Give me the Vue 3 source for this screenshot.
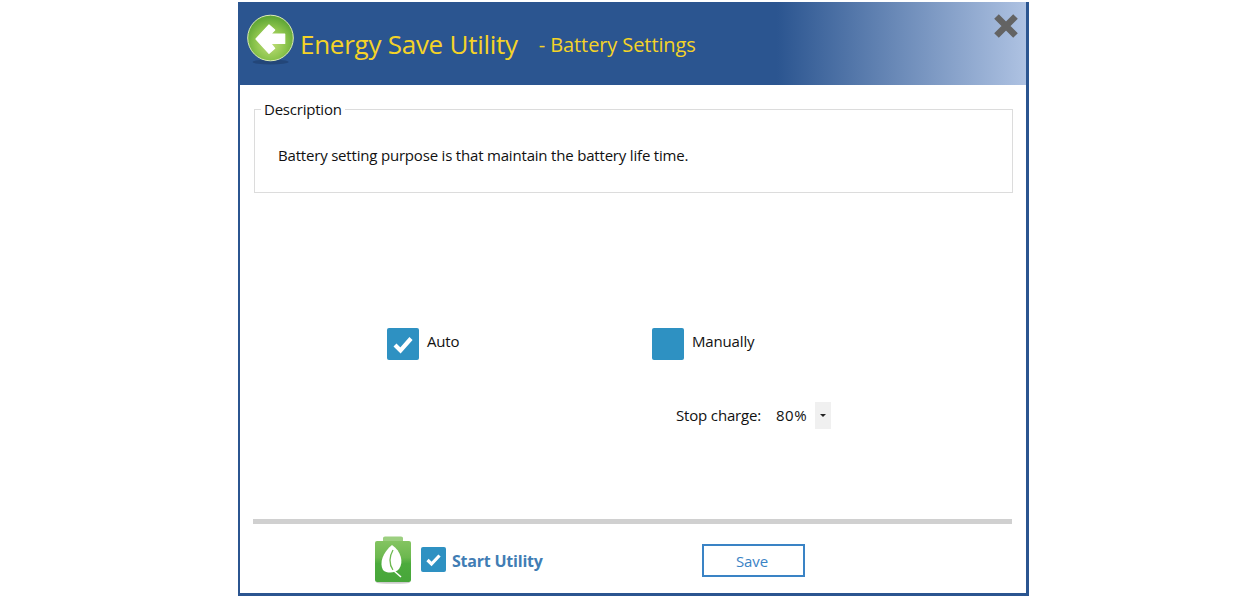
<script setup>
import { ref } from 'vue'

const auto = ref(true)
const manual = ref(false)
const startUtility = ref(true)
</script>

<template>
  <div class="page">
    <div class="window">
      <header class="header">
        <svg class="back" width="50" height="52" viewBox="0 0 50 52">
          <defs>
            <radialGradient id="ball" cx="50%" cy="62%" r="58%">
              <stop offset="0" stop-color="#c4e07c" />
              <stop offset="0.6" stop-color="#8cc44c" />
              <stop offset="1" stop-color="#5fa635" />
            </radialGradient>
          </defs>
          <ellipse cx="23.5" cy="48" rx="18" ry="2.4" fill="#1d3a66" opacity="0.55" />
          <circle cx="23.5" cy="24" r="22.8" fill="url(#ball)" stroke="#dcecb4" stroke-width="1" />
          <path d="M9 25 L22 11 L27.7 16 L23.7 20 L37.7 20 L37.7 29.5 L23.7 29.5 L27.7 34.3 L22 39.3Z" fill="#fff" stroke="#fff" stroke-width="1.2" stroke-linejoin="round" />
        </svg>
        <span class="title">Energy Save Utility</span>
        <span class="subtitle">- Battery Settings</span>
        <svg class="close" width="26" height="26" viewBox="0 0 26 26">
          <path d="M3.5 3.5 L22.5 22.5 M22.5 3.5 L3.5 22.5" stroke="#636363" stroke-width="6.5" />
        </svg>
      </header>

      <main class="content">
        <fieldset class="desc">
          <legend>Description</legend>
          <p>Battery setting purpose is that maintain the battery life time.</p>
        </fieldset>

        <div class="options">
          <label class="option option-auto">
            <span class="check" @click="auto = !auto">
              <svg v-if="auto" width="32" height="32" viewBox="0 0 32 32">
                <path d="M8 17 L13.5 22.5 L24 10.5" fill="none" stroke="#fff" stroke-width="4.2" />
              </svg>
            </span>
            <span>Auto</span>
          </label>
          <div class="manual-col">
            <label class="option">
              <span class="check" @click="manual = !manual">
                <svg v-if="manual" width="32" height="32" viewBox="0 0 32 32">
                  <path d="M8 17 L13.5 22.5 L24 10.5" fill="none" stroke="#fff" stroke-width="4.2" />
                </svg>
              </span>
              <span>Manually</span>
            </label>
            <div class="stop">
              <span class="stop-label">Stop charge:</span>
              <span class="stop-value">80%</span>
              <span class="drop"></span>
            </div>
          </div>
        </div>

        <div class="rule"></div>

        <footer class="footer">
          <svg class="battery" width="38" height="48" viewBox="0 0 38 48">
            <defs>
              <linearGradient id="cell" x1="0" y1="0" x2="0" y2="1">
                <stop offset="0" stop-color="#84c461" />
                <stop offset="0.4" stop-color="#6cb84f" />
                <stop offset="0.55" stop-color="#4cab3c" />
                <stop offset="1" stop-color="#47a63a" />
              </linearGradient>
            </defs>
            <ellipse cx="18" cy="46.5" rx="17" ry="1.3" fill="#b5b5b5" opacity="0.7" />
            <path d="M8 2 Q8 0.5 10 0.5 L26 0.5 Q28 0.5 28 2 L28 5 L8 5Z" fill="#9ccf80" />
            <rect x="0" y="5" width="36" height="41" rx="2" fill="url(#cell)" />
            <path d="M17 9 C26 15 29 26 24 33 C21 37 12 38 8 34 C4 27 8 16 17 9Z" fill="#fff" />
            <path d="M18 14 C14 21 14 28 18 34" fill="none" stroke="#6cb84f" stroke-width="1.3" />
            <path d="M18 34 L26 41" stroke="#fff" stroke-width="1.6" />
          </svg>
          <span class="check check-small" @click="startUtility = !startUtility">
            <svg v-if="startUtility" width="25" height="25" viewBox="0 0 25 25">
              <path d="M6.5 13 L10.5 17 L18.5 8.5" fill="none" stroke="#fff" stroke-width="3.2" />
            </svg>
          </span>
          <span class="start">Start Utility</span>
          <button class="save" type="button">Save</button>
        </footer>
      </main>
    </div>
  </div>
</template>

<style>
html,
body {
  margin: 0;
  background: #fff;
}
</style>

<style scoped>
.page {
  height: 599px;
  padding: 2px 0 0 238px;
  box-sizing: border-box;
  font-family: 'Open Sans', 'Noto Sans', sans-serif;
  color: #111;
  overflow: hidden;
}

.window {
  width: 791px;
  height: 594px;
  box-sizing: border-box;
  border: 3px solid #2b5590;
  border-top: 0;
  border-left-width: 2px;
  display: flex;
  flex-direction: column;
}

.header {
  height: 83px;
  flex: none;
  display: flex;
  align-items: flex-start;
  position: relative;
  background: linear-gradient(90deg, #2b5590 0, #2b5590 537px, #aec2e2 100%);
}

.back {
  margin: 12px 0 0 7px;
  flex: none;
}

.title {
  margin: 24px 0 0 3px;
  font-size: 26px;
  line-height: 36px;
  letter-spacing: -0.26px;
  color: #f5d327;
  white-space: nowrap;
}

.subtitle {
  margin: 27px 0 0 21px;
  font-size: 20px;
  line-height: 32px;
  letter-spacing: -0.1px;
  color: #f5d327;
  white-space: nowrap;
}

.close {
  position: absolute;
  top: 11px;
  right: 7px;
}

.content {
  flex: 1;
  display: flex;
  flex-direction: column;
  padding: 0 14px 0 13px;
  min-height: 0;
}

.desc {
  margin: 14px 0 0 1px;
  padding: 0;
  width: 759px;
  height: 94px;
  box-sizing: border-box;
  border: 1px solid #dcdcdc;
  font-size: 15px;
  flex: none;
}

.desc legend {
  margin-left: 6px;
  padding: 0 3px;
  font-size: 15px;
  letter-spacing: -0.22px;
  line-height: 20px;
}

.desc p {
  margin: 26px 0 0 23px;
  font-size: 15px;
  line-height: 20px;
  letter-spacing: -0.19px;
}

.options {
  display: flex;
  align-items: flex-start;
  margin: 135px 0 0 134px;
  height: 191px;
  flex: none;
  font-size: 15px;
  letter-spacing: -0.16px;
}

.option {
  display: flex;
  align-items: flex-start;
  gap: 8px;
  line-height: 26px;
}

.option-auto {
  width: 265px;
}

.check {
  width: 32px;
  height: 32px;
  flex: none;
  display: block;
  background: #2e91c2;
  border-radius: 2px;
  cursor: pointer;
}

.check svg {
  display: block;
}

.manual-col {
  display: flex;
  flex-direction: column;
}

.stop {
  display: flex;
  align-items: center;
  margin: 42px 0 0 24px;
  height: 27px;
}

.stop-label {
  width: 100px;
  padding-bottom: 2px;
  white-space: nowrap;
}

.stop-value {
  width: 39px;
  padding-bottom: 2px;
  letter-spacing: 0.5px;
}

.drop {
  width: 16px;
  height: 27px;
  background: #f0f0f0;
  position: relative;
}

.drop::after {
  content: '';
  position: absolute;
  left: 5px;
  top: 12px;
  border: 3px solid transparent;
  border-top: 3px solid #222;
  border-bottom: 0;
}

.rule {
  height: 5px;
  width: 759px;
  background: #d0d0d0;
  flex: none;
}

.footer {
  display: flex;
  align-items: flex-start;
  flex: none;
  padding-left: 122px;
}

.battery {
  margin-top: 12px;
  flex: none;
}

.check-small {
  width: 25px;
  height: 25px;
  margin: 23px 0 0 8px;
}

.start {
  margin: 24px 0 0 6px;
  width: 250px;
  font-size: 16px;
  line-height: 26px;
  font-weight: 700;
  letter-spacing: -0.22px;
  color: #417db4;
}

.save {
  margin-top: 20px;
  width: 103px;
  height: 33px;
  box-sizing: border-box;
  background: #fff;
  border: 2px solid #3a83c5;
  border-radius: 0;
  padding: 0 3px 0 0;
  font-family: inherit;
  font-size: 15px;
  letter-spacing: -0.1px;
  color: #3a83c5;
}
</style>
